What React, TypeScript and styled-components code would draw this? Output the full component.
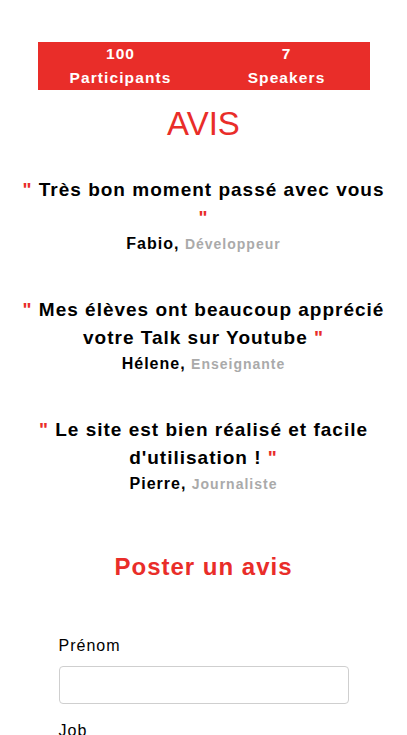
import React from "react";
import styled, { createGlobalStyle } from "styled-components";

const GlobalStyle = createGlobalStyle`
    body {
        margin: 0;
        background: #ffffff;
        font-family: "Liberation Sans", Arial, sans-serif;
        color: #000;
    }
`;

const Page = styled.div`
    width: 407px;
    padding-top: 42px;
    display: flex;
    flex-direction: column;
    align-items: center;
`;

const Stats = styled.div`
    width: 332px;
    height: 48px;
    background: #e92d29;
    display: grid;
    grid-template-columns: 1fr 1fr;
`;

const Stat = styled.div`
    color: #fff;
    font-weight: bold;
    font-size: 15.5px;
    letter-spacing: 1.1px;
    line-height: 24px;
    text-align: center;
`;

const Title = styled.h1`
    margin: 14px 0 0;
    color: #e92d29;
    font-size: 33px;
    font-weight: normal;
    line-height: 40px;
`;

const Reviews = styled.div`
    width: 370px;
    margin-top: 32px;
    display: flex;
    flex-direction: column;
    gap: 40px;
`;

const Review = styled.div`
    text-align: center;
`;

const Quote = styled.p`
    margin: 0;
    font-size: 19px;
    font-weight: bold;
    letter-spacing: 1px;
    line-height: 28px;
`;

const Mark = styled.span`
    color: #e92d29;
`;

const Author = styled.p`
    margin: 0;
    font-size: 16px;
    font-weight: bold;
    letter-spacing: 1px;
    line-height: 24px;
`;

const Job = styled.span`
    color: #aaaaaa;
    font-size: 14px;
`;

const FormTitle = styled.h2`
    margin: 56px 0 0;
    color: #e92d29;
    font-size: 24px;
    font-weight: bold;
    letter-spacing: 1px;
    line-height: 30px;
`;

const Form = styled.form`
    width: 290px;
    margin-top: 54px;
    display: flex;
    flex-direction: column;
`;

const Label = styled.label`
    font-size: 16px;
    letter-spacing: 1px;
    line-height: 20px;
    margin-bottom: 10px;
`;

const Input = styled.input`
    box-sizing: border-box;
    width: 290px;
    height: 38px;
    border: 1px solid #cfcfcf;
    border-radius: 4px;
    margin-bottom: 17px;
    font: inherit;
`;

const reviews = [
    { text: "Très bon moment passé avec vous", name: "Fabio", job: "Développeur" },
    { text: "Mes élèves ont beaucoup apprécié votre Talk sur Youtube", name: "Hélene", job: "Enseignante" },
    { text: "Le site est bien réalisé et facile d'utilisation !", name: "Pierre", job: "Journaliste" },
];

const App = () => {
    return (
        <>
            <GlobalStyle />
            <Page>
                <Stats>
                    <Stat>100<br />Participants</Stat>
                    <Stat>7<br />Speakers</Stat>
                </Stats>
                <Title>AVIS</Title>
                <Reviews>
                    {reviews.map((r) => (
                        <Review key={r.name}>
                            <Quote>
                                <Mark>"</Mark> {r.text} <Mark>"</Mark>
                            </Quote>
                            <Author>
                                {r.name}, <Job>{r.job}</Job>
                            </Author>
                        </Review>
                    ))}
                </Reviews>
                <FormTitle>Poster un avis</FormTitle>
                <Form>
                    <Label>Prénom</Label>
                    <Input type="text" />
                    <Label>Job</Label>
                    <Input type="text" />
                </Form>
            </Page>
        </>
    );
};

export default App;
